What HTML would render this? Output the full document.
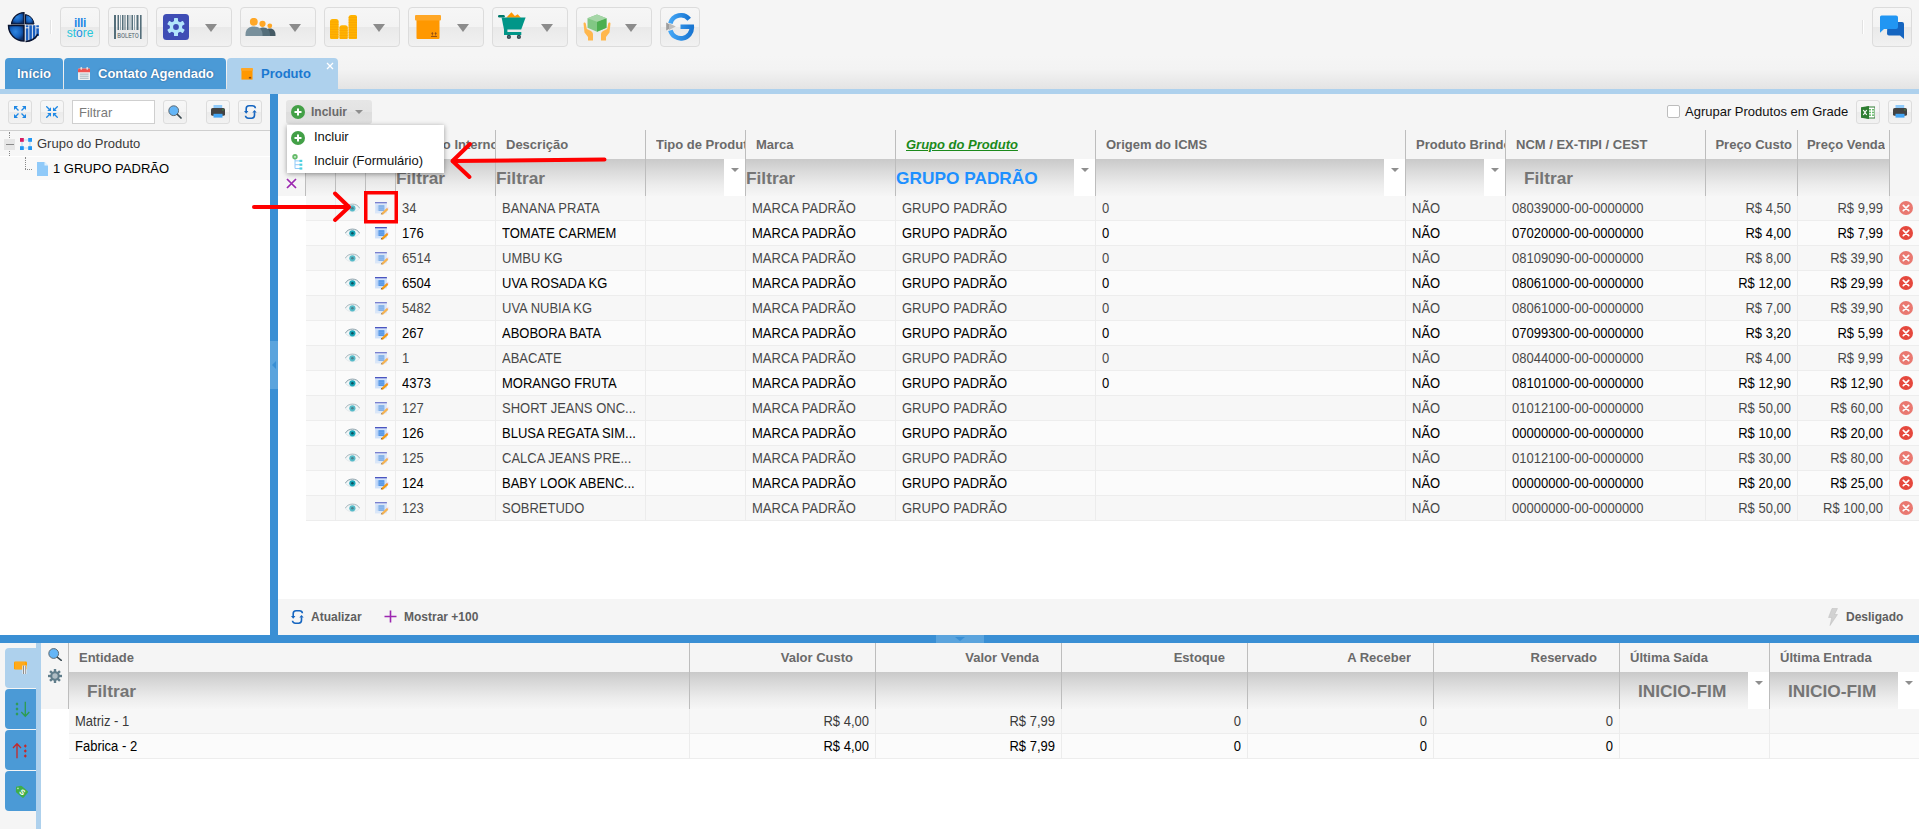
<!DOCTYPE html>
<html lang="pt-br">
<head>
<meta charset="utf-8">
<title>Produto</title>
<style>
*{box-sizing:border-box;margin:0;padding:0}
html,body{width:1919px;height:829px;overflow:hidden;background:#f5f5f5}
body{position:relative;font-family:"Liberation Sans",sans-serif;font-size:13px;color:#000}
.abs{position:absolute}
svg{display:block}
.ic{position:absolute}
/* top toolbar */
.tb{position:absolute;top:7px;height:40px;border:1px solid #dcdcdc;border-radius:4px;background:linear-gradient(#f6f6f6 0,#f3f3f3 50%,#e9e9e9 50%,#f1f1f1 100%)}
.tb .arr{position:absolute;left:48px;top:16px;width:0;height:0;border-left:6px solid transparent;border-right:6px solid transparent;border-top:8px solid #8c8c8c}
/* tabs */
.tab{position:absolute;top:58px;height:31px;border-radius:4px 4px 0 0;background:#4b9ad6;color:#fff;font-weight:bold;font-size:13px;line-height:31px;text-shadow:0 0 2px rgba(0,0,40,.45);white-space:nowrap}
.tab.sel{background:#aed1ed;color:#1b78d0;text-shadow:none}
/* small buttons */
.sb{position:absolute;width:24px;height:24px;border:1px solid #dddddd;border-radius:3px;background:linear-gradient(#f7f7f7 0,#f4f4f4 50%,#ebebeb 50%,#f2f2f2 100%)}
/* grid */
.hd{position:absolute;font-weight:bold;font-size:13px;color:#6a6a6a;white-space:nowrap;overflow:hidden;line-height:28px;height:28px}
.hsep{position:absolute;width:1px;background:#bdbdbd}
.fl{position:absolute;font-weight:bold;font-size:17.3px;color:#757575;white-space:nowrap;line-height:38px;height:38px}
.dd{position:absolute;background:#fff}
.dd:after{content:"";position:absolute;left:50%;margin-left:-4px;top:9px;border-left:4px solid transparent;border-right:4px solid transparent;border-top:4px solid #8e8e8e}
.row{position:absolute;left:306px;width:1613px;height:25px;border-bottom:1px solid #ededed}
.row.odd{background:#f7f7f7}
.row.even{background:#fbfbfb}
.row .vl{position:absolute;top:0;height:25px;width:1px;background:#ececec}
.row .rc{position:absolute;left:0;top:0;width:100%;height:24px}
.row.odd .rc{opacity:.72}
.row .c{position:absolute;top:1px;height:24px;line-height:24px;font-size:13px;white-space:nowrap;overflow:hidden}
.row .c.r{text-align:right}
.row .c,.brow .c{transform:scaleY(1.08);transform-origin:50% 72%}
.brow{position:absolute;left:69px;width:1850px;height:25px;border-bottom:1px solid #ededed}
.brow .c{position:absolute;top:1px;height:24px;line-height:24px;font-size:13px;white-space:nowrap}
.brow .c.r{text-align:right}
.brow .vl{position:absolute;top:0;height:25px;width:1px;background:#ececec}
.bt{position:absolute;left:5px;width:31px;height:40px;border-radius:4px 0 0 4px;background:#4b9ad6}
</style>
</head>
<body>
<!-- top toolbar -->
<svg class="ic" style="left:6px;top:10px" width="36" height="34" viewBox="0 0 36 34">
 <defs><radialGradient id="lg" cx="45%" cy="40%" r="60%"><stop offset="0" stop-color="#2f86e0"/><stop offset=".6" stop-color="#1560bd"/><stop offset="1" stop-color="#0b2e66"/></radialGradient></defs>
 <path d="M18 2.5 A13 13 0 0 0 5.5 14 L18 14 Z" fill="url(#lg)" stroke="#0a1430" stroke-width="1.2"/>
 <path d="M19.5 4.5 A11 11 0 0 1 28 14 L19.5 14 Z" fill="url(#lg)" stroke="#0a1430" stroke-width="1"/>
 <path d="M2.5 15.5 L18 15.5 L18 31 A15.5 15.5 0 0 1 2.5 15.5 Z" fill="url(#lg)" stroke="#0a1430" stroke-width="1.4"/>
 <path d="M19.5 31.5 L19.5 17 L33.5 17 A15 15 0 0 1 19.5 31.5Z" fill="#0b2e66" opacity=".0"/>
 <g fill="#1a5fbf"><rect x="19.800" y="18.300" width="2.600" height="12.200"/><rect x="23.300" y="15.300" width="2.600" height="15.700"/><rect x="26.800" y="15.300" width="2.600" height="13.700"/><rect x="30.300" y="18.300" width="2.600" height="7.700"/><rect x="19.800" y="15.300" width="2.600" height="2"/><rect x="30.300" y="15.300" width="2.600" height="2"/></g>
 <path d="M19.5 31.5 A15 15 0 0 0 32 24" fill="none" stroke="#0a1430" stroke-width="1.6"/>
</svg>
<div class="abs" style="left:51px;top:20px;width:1px;height:14px;background:#fff;box-shadow:-1px 0 0 #e2e2e2"></div>

<div class="tb" style="left:60px;width:40px">
 <div class="abs" style="left:0;top:9.700px;width:38px;text-align:center;font-weight:bold;font-size:12px;line-height:10px;color:#1e88e5;letter-spacing:-.3px">illi</div>
 <div class="abs" style="left:0;top:19.700px;width:38px;text-align:center;font-size:12px;line-height:10px;color:#26c6da">st<span style="color:#1e88e5">o</span>re</div>
</div>
<div class="tb" style="left:108px;width:40px">
 <svg class="ic" style="left:5px;top:7px" width="28" height="25" viewBox="0 0 28 25">
  <g fill="#546e7a"><rect x="0" y="0" width="2" height="24"/><rect x="3.5" y="0" width="1.5" height="15"/><rect x="6" y="0" width="1" height="15" fill="#90a4ae"/><rect x="8" y="0" width="1.5" height="15"/><rect x="10.5" y="0" width="1" height="15"/><rect x="13" y="0" width="1.5" height="15"/><rect x="15.5" y="0" width="1" height="15" fill="#90a4ae"/><rect x="17.5" y="0" width="1.5" height="15"/><rect x="20" y="0" width="1" height="15" fill="#90a4ae"/><rect x="22.5" y="0" width="2" height="15"/><rect x="26" y="0" width="1.6" height="24"/></g>
  <text x="3.200" y="23" font-family="Liberation Sans" font-weight="bold" font-size="6.300" fill="#78868c" textLength="21.500" lengthAdjust="spacingAndGlyphs">BOLETO</text>
 </svg>
</div>
<div class="tb" style="left:156px;width:76px"><i class="arr"></i>
 <svg class="ic" style="left:6px;top:6px" width="26" height="26" viewBox="0 0 26 26"><rect width="26" height="26" rx="3.5" fill="#3f4db5"/>
 <g transform="translate(13 13)" fill="#b3e5fc"><circle r="6.2"/><rect x="-2" y="-9" width="4" height="4" rx=".6" transform="rotate(0)"/><rect x="-2" y="-9" width="4" height="4" rx=".6" transform="rotate(60)"/><rect x="-2" y="-9" width="4" height="4" rx=".6" transform="rotate(120)"/><rect x="-2" y="-9" width="4" height="4" rx=".6" transform="rotate(180)"/><rect x="-2" y="-9" width="4" height="4" rx=".6" transform="rotate(240)"/><rect x="-2" y="-9" width="4" height="4" rx=".6" transform="rotate(300)"/><circle r="2.9" fill="#3f4db5"/></g></svg>
</div>
<div class="tb" style="left:240px;width:76px"><i class="arr"></i>
 <svg class="ic" style="left:4px;top:10px" width="31" height="19" viewBox="0 0 31 19">
  <path d="M19 18 C19 12.5 21.5 10.5 25 10.5 C28.5 10.5 30.5 13 30.5 17 L30.5 18 Z" fill="#455a64"/>
  <path d="M12 18 C12 11.5 14.5 9.5 18.5 9.5 C22.5 9.5 25 12.5 25 17 L25 18 Z" fill="#546e7a"/>
  <path d="M.5 18 L.5 16.5 C.5 11 4 8.5 9 8.5 C14 8.5 17.5 11.5 17.5 16.5 L17.5 18 Z" fill="#78909c"/>
  <circle cx="8.8" cy="3.8" r="3.9" fill="#ffa726"/><circle cx="17.5" cy="5.8" r="3.1" fill="#ffa726"/><circle cx="24.8" cy="7.8" r="2.4" fill="#ffa726"/>
 </svg>
</div>
<div class="tb" style="left:324px;width:76px"><i class="arr"></i>
 <svg class="ic" style="left:5px;top:6.800px" width="27.200" height="24.600" viewBox="0 0 27.200 24.600">
  <g fill="#ffb300"><rect x="0" y="4.100" width="8.600" height="20.500" rx="2.600"/><rect x="9.400" y="10.200" width="8.400" height="14.400" rx="2.600"/><rect x="18.600" y="0" width="8.600" height="24.600" rx="2.600"/></g>
  <g stroke="#f9a000" stroke-width=".6" opacity=".9"><path d="M0 7h8.600M0 9.500h8.600M0 12h8.600M0 14.500h8.600M0 17h8.600M0 19.500h8.600M0 22h8.600M9.400 13h8.400M9.400 15.500h8.400M9.400 18h8.400M9.400 20.500h8.400M9.400 23h8.400M18.600 2.500h8.600M18.600 5h8.600M18.600 7.500h8.600M18.600 10h8.600M18.600 12.500h8.600M18.600 15h8.600M18.600 17.500h8.600M18.600 20h8.600M18.600 22.500h8.600"/></g>
 </svg>
</div>
<div class="tb" style="left:408px;width:76px"><i class="arr"></i>
 <svg class="ic" style="left:6px;top:7px" width="27" height="25" viewBox="0 0 27 25">
  <rect x="1.500" y="4" width="23" height="20" rx="1" fill="#ff9800"/><rect x="0" y="0" width="26" height="5.5" rx="1" fill="#ffa726"/>
  <g fill="#8d4b16"><rect x="16" y="21" width="6" height=".9"/><path d="M17.300 17l-1.300 1.800h.9v1.700h.8v-1.700h.9zM20.700 17l-1.300 1.800h.9v1.700h.8v-1.700h.9z"/></g>
 </svg>
</div>
<div class="tb" style="left:492px;width:76px"><i class="arr"></i>
 <svg class="ic" style="left:5px;top:4px" width="28" height="28" viewBox="0 0 28 28">
  <path d="M8.300 5.800L13.400 0.200L16.900 3.900L19.700 2.200L22.900 5.800Z" fill="#ff9800"/>
  <rect x="0" y="3.100" width="6.800" height="2.400" rx="1.200" fill="#00796b"/>
  <path d="M3.600 5.500H27.600L23.200 17.500H6Z" fill="#009688"/>
  <path d="M6 17H9.400V20.100H23.300V22.900H6Z" fill="#009688"/>
  <circle cx="10.900" cy="24.900" r="2.100" fill="#37474f"/><circle cx="20.900" cy="24.900" r="2.100" fill="#37474f"/><circle cx="10.900" cy="24.900" r=".8" fill="#607d8b"/><circle cx="20.900" cy="24.900" r=".8" fill="#607d8b"/>
 </svg>
</div>
<div class="tb" style="left:576px;width:76px"><i class="arr"></i>
 <svg class="ic" style="left:6px;top:6px" width="28" height="28" viewBox="0 0 28 28">
  <path d="M14 .5 L23.500 4.200 V13.800 L14 17.800 L4.500 13.800 V4.200 Z" fill="#81c784"/>
  <path d="M14 7.800 L23.500 4.200 V13.800 L14 17.800 Z" fill="#4caf50"/>
  <path d="M14 .5 L23.500 4.200 L14 7.800 L4.500 4.200 Z" fill="#a5d6a7"/>
  <path d="M0.500 9.500 C0.500 8 2.500 8 2.800 9.500 L3.800 15 L7.500 16.800 C9 17.500 10 19 10 20.500 V26.500 H5 V23 L1.500 18.500 Z" fill="#ffb74d"/>
  <path d="M27.500 9.500 C27.500 8 25.500 8 25.200 9.500 L24.200 15 L20.500 16.800 C19 17.500 18 19 18 20.500 V26.500 H23 V23 L26.500 18.500 Z" fill="#ffb74d"/>
 </svg>
</div>
<div class="tb" style="left:660px;width:40px">
 <svg class="ic" style="left:5px;top:5px" width="30" height="28" viewBox="0 0 30 28">
  <defs><linearGradient id="gg" x1="0" y1="0" x2="1" y2="0"><stop offset="0" stop-color="#42a5f5"/><stop offset="1" stop-color="#1976d2"/></linearGradient></defs>
  <path d="M23.200 6.200A10.900 10.900 0 0 0 4.400 10.300" fill="none" stroke="url(#gg)" stroke-width="4.600"/>
  <path d="M4.400 17.300A10.900 10.900 0 0 0 25.800 13.700H14.500" fill="none" stroke="url(#gg)" stroke-width="4.600"/>
  <path d="M0.200 9.600L7.500 13.600L0.200 17.600Z" fill="#9e9e9e"/><path d="M3 10.200L9.800 13.600L3 17Z" fill="#bdbdbd"/>
 </svg>
</div>
<!-- chat button right -->
<div class="abs" style="left:1863px;top:20px;width:1px;height:14px;background:#fff;box-shadow:-1px 0 0 #e2e2e2"></div>
<div class="tb" style="left:1872px;width:40px">
 <svg class="ic" style="left:6px;top:7px" width="26" height="25" viewBox="0 0 26 25">
  <path d="M8.500 7 H23 Q25 7 25 9 V24 L21 20.500 H10 Q8 20.500 8 18.500 Z" fill="#1565c0"/>
  <path d="M2.500 0.500 H17 Q19 0.500 19 2.500 V12 Q19 14 17 14 H5 L1 17.800 V2 Q1 0.500 2.500 0.500 Z" fill="#2196f3"/>
 </svg>
</div>

<!-- tab strip -->
<div class="abs" style="left:5px;top:56px;width:1914px;height:33px;background:linear-gradient(#f5f5f5 0,#f3f3f3 40%,#e4e4e4 100%)"></div>
<div class="abs" style="left:0;top:89px;width:1919px;height:5px;background:#aed1ed"></div>
<div class="tab" style="left:5px;width:58px;padding-left:12px">Início</div>
<div class="tab" style="left:64px;width:162px;padding-left:34px">Contato Agendado
 <svg class="ic" style="left:13.500px;top:9px" width="12.500" height="13.200" viewBox="0 0 13 14" preserveAspectRatio="none"><rect x="0" y="1.500" width="13" height="12.500" rx="1.500" fill="#eceff1"/><path d="M0 3 Q0 1.500 1.500 1.500 H11.500 Q13 1.500 13 3 V5.500 H0Z" fill="#ef5350"/><rect x="2.500" y="0" width="1.800" height="3" rx=".8" fill="#e0e0e0"/><rect x="8.700" y="0" width="1.800" height="3" rx=".8" fill="#e0e0e0"/><g fill="#b0bec5"><rect x="2" y="7" width="9" height="1.200"/><rect x="2" y="9.200" width="9" height="1.200"/><rect x="2" y="11.400" width="9" height="1.200"/></g></svg>
</div>
<div class="tab sel" style="left:227px;width:111px;padding-left:34px">Produto
 <svg class="ic" style="left:14px;top:10px" width="12" height="11.600" viewBox="0 0 13 13" preserveAspectRatio="none"><rect x=".5" y="2" width="12" height="11" fill="#ff9800"/><rect x="0" y="0" width="13" height="3" rx=".5" fill="#ffa726"/><rect x="8.500" y="10" width="2.500" height="1.800" fill="#8d4b16"/></svg>
 <svg class="ic" style="left:99px;top:4px" width="8" height="8" viewBox="0 0 8 8"><path d="M1 1L7 7M7 1L1 7" stroke="#fff" stroke-width="1.300"/></svg>
</div>

<!-- left panel -->
<div class="abs" style="left:0;top:94px;width:270px;height:541px;background:#fff"></div>
<div class="abs" style="left:0;top:94px;width:270px;height:37px;background:#f5f5f5;border-bottom:1px solid #cfcfcf"></div>
<div class="sb" style="left:8px;top:100px"><svg class="ic" style="left:5px;top:5px" width="12" height="12" viewBox="0 0 12 12"><g fill="#1e88e5"><path d="M0 0H4L0 4Z"/><path d="M12 0H8L12 4Z"/><path d="M0 12H4L0 8Z"/><path d="M12 12H8L12 8Z"/></g><g stroke="#1e88e5" stroke-width="1.300"><path d="M1 1L4.500 4.500M11 1L7.500 4.500M1 11L4.500 7.500M11 11L7.500 7.500"/></g></svg></div>
<div class="sb" style="left:40px;top:100px"><svg class="ic" style="left:5px;top:5px" width="12" height="12" viewBox="0 0 12 12"><g fill="#1e88e5"><path d="M5 5H1.200L5 1.200Z"/><path d="M7 5H10.800L7 1.200Z"/><path d="M5 7H1.200L5 10.800Z"/><path d="M7 7H10.800L7 10.800Z"/></g><g stroke="#1e88e5" stroke-width="1.300"><path d="M0.300 0.300L4 4M11.700 0.300L8 4M0.300 11.700L4 8M11.700 11.700L8 8"/></g></svg></div>
<div class="abs" style="left:72px;top:100px;width:83px;height:24px;border:1px solid #cfcfcf;background:#fff;font-size:13px;line-height:23px;color:#7a7a7a;padding-left:6px">Filtrar</div>
<div class="sb" style="left:163px;top:100px"><svg class="ic" style="left:4px;top:4px" width="14" height="14" viewBox="0 0 14 14"><circle cx="5.700" cy="5.700" r="4.900" fill="#64b5f6" stroke="#5f6b73" stroke-width="1"/><path d="M9.500 9.500L13 13" stroke="#37474f" stroke-width="1.700" stroke-linecap="round"/></svg></div>
<div class="sb" style="left:206px;top:100px"><svg class="ic" style="left:4px;top:4px" width="14" height="13" viewBox="0 0 14 13"><rect x="2.500" y="0" width="8.700" height="3.600" fill="#90caf9"/><rect x="0" y="3" width="14" height="7.800" rx="1.600" fill="#424242"/><rect x="2.500" y="8.800" width="9" height="3.800" fill="#42a5f5"/><rect x="11.300" y="4.300" width="1.200" height="1.200" fill="#43a047"/></svg></div>
<div class="sb" style="left:238px;top:100px"><svg class="ic" style="left:5px;top:4px" width="13" height="14" viewBox="0 0 13 14"><g fill="none" stroke="#1565c0" stroke-width="1.600"><path d="M2.200 6.500V3.700Q2.200 0.800 5.100 0.800H8.400Q11.200 0.800 11.400 3.200"/><path d="M10.500 7.200V10.300Q10.500 13.200 7.600 13.200H4.500Q1.700 13.200 1.500 10.800"/></g><path d="M0 6.100H4.400L2.200 8.700Z" fill="#1565c0"/><path d="M8.300 7.600H12.700L10.500 5Z" fill="#1565c0"/></svg></div>
<!-- tree -->
<div class="abs" style="left:0;top:131px;width:270px;height:25px;background:#f7f7f7"></div>
<div class="abs" style="left:0;top:157px;width:270px;height:23px;background:#f9f9f9"></div>
<div class="abs" style="left:9px;top:132px;width:0;height:24px;border-left:1px dotted #8a8a8a"></div>
<div class="abs" style="left:4px;top:139px;width:11px;height:11px;background:#e6e6e6"></div>
<div class="abs" style="left:6px;top:144px;width:8px;height:1px;background:#8a8a8a"></div>
<svg class="ic" style="left:20px;top:138px" width="12" height="12" viewBox="0 0 12 12"><path d="M2 2H10V10H2Z" fill="none" stroke="#bbdefb" stroke-width="1.200"/><rect x="0" y="0" width="3.800" height="3.800" fill="#d81b60"/><rect x="8.200" y="0" width="3.800" height="3.800" fill="#2196f3"/><rect x="0" y="8.200" width="3.800" height="3.800" fill="#2196f3"/><rect x="8.200" y="8.200" width="3.800" height="3.800" fill="#2196f3"/></svg>
<div class="abs" style="left:37px;top:132px;height:24px;line-height:24px;font-size:13px;color:#3a3a3a">Grupo do Produto</div>
<div class="abs" style="left:25px;top:157px;width:0;height:12px;border-left:1px dotted #8a8a8a"></div>
<div class="abs" style="left:25px;top:169px;width:7px;height:0;border-top:1px dotted #8a8a8a"></div>
<svg class="ic" style="left:37px;top:162px" width="11" height="14" viewBox="0 0 11 14"><path d="M0 0H7.500L11 3.500V14H0Z" fill="#90caf9"/><path d="M7.500 0L11 3.500H7.500Z" fill="#e3f2fd"/></svg>
<div class="abs" style="left:53px;top:157px;height:24px;line-height:24px;font-size:13px;color:#000">1 GRUPO PADRÃO</div>
<!-- splitters -->
<div class="abs" style="left:270px;top:94px;width:8px;height:541px;background:#3a8fd4"></div>
<div class="abs" style="left:270px;top:341px;width:8px;height:48px;background:#5ba4dd"></div>
<div class="abs" style="left:272px;top:361px;width:0;height:0;border-top:4.500px solid transparent;border-bottom:4.500px solid transparent;border-right:4px solid #3a8fd4"></div>
<div class="abs" style="left:0;top:635px;width:1919px;height:8px;background:#3a8fd4"></div>
<div class="abs" style="left:936px;top:635px;width:48px;height:8px;background:#5ba4dd"></div>
<div class="abs" style="left:955px;top:637px;width:0;height:0;border-left:5px solid transparent;border-right:5px solid transparent;border-top:4px solid #3a8fd4"></div>

<!-- right panel -->
<div class="abs" style="left:278px;top:94px;width:1641px;height:541px;background:#fff"></div>
<div class="abs" style="left:278px;top:94px;width:1641px;height:65px;background:#f5f5f5"></div>
<div class="abs" style="left:286px;top:100px;width:86px;height:24px;border-radius:3px;background:linear-gradient(#e6e6e6 0,#e3e3e3 50%,#dddddd 50%,#e0e0e0 100%);font-weight:bold;font-size:12px;color:#6a6a6a;line-height:24px;padding-left:25px">Incluir
 <svg class="ic" style="left:5px;top:5px" width="14" height="14" viewBox="0 0 14 14"><circle cx="7" cy="7" r="7" fill="#43a047"/><path d="M7 3.500V10.500M3.500 7H10.500" stroke="#fff" stroke-width="2"/></svg>
 <i class="abs" style="left:69px;top:10px;width:0;height:0;border-left:4px solid transparent;border-right:4px solid transparent;border-top:4px solid #8e8e8e"></i>
</div>
<div class="abs" style="left:1667px;top:105px;width:13px;height:13px;border:1px solid #bdbdbd;border-radius:2px;background:#fff"></div>
<div class="abs" style="left:1685px;top:100px;height:24px;line-height:23px;font-size:13px;color:#111">Agrupar Produtos em Grade</div>
<div class="sb" style="left:1856px;top:100px"><svg class="ic" style="left:4px;top:5px" width="14" height="13" viewBox="0 0 14 13"><rect x="6" y="1" width="8" height="11" fill="#fff" stroke="#2e7d32" stroke-width="1"/><g fill="#66bb6a"><rect x="8" y="3" width="2" height="1.500"/><rect x="11" y="3" width="2" height="1.500"/><rect x="8" y="5.700" width="2" height="1.500"/><rect x="11" y="5.700" width="2" height="1.500"/><rect x="8" y="8.400" width="2" height="1.500"/><rect x="11" y="8.400" width="2" height="1.500"/></g><path d="M0 1.200L8 0V13L0 11.800Z" fill="#2e7d32"/><path d="M2.300 4L5.700 9M5.700 4L2.300 9" stroke="#fff" stroke-width="1.200"/></svg></div>
<div class="sb" style="left:1888px;top:100px"><svg class="ic" style="left:4px;top:4px" width="14" height="13" viewBox="0 0 14 13"><rect x="2.500" y="0" width="8.700" height="3.600" fill="#90caf9"/><rect x="0" y="3" width="14" height="7.800" rx="1.600" fill="#424242"/><rect x="2.500" y="8.800" width="9" height="3.800" fill="#42a5f5"/><rect x="11.300" y="4.300" width="1.200" height="1.200" fill="#43a047"/></svg></div>
<!-- filter row bg -->
<div class="abs" style="left:278px;top:159px;width:28px;height:37px;background:#f5f5f5"></div>
<div class="abs" style="left:306px;top:159px;width:1584px;height:37px;background:linear-gradient(#c9c9c9 0,#d9d9d9 30%,#ececec 70%,#f6f6f6 100%)"></div>
<div class="abs" style="left:1890px;top:159px;width:29px;height:37px;background:#f5f5f5"></div>
<!-- header separators -->
<i class="hsep" style="left:305px;top:130px;height:66px"></i>
<i class="hsep" style="left:335px;top:130px;height:66px"></i>
<i class="hsep" style="left:365px;top:130px;height:66px"></i>
<i class="hsep" style="left:395px;top:130px;height:66px"></i>
<i class="hsep" style="left:495px;top:130px;height:66px"></i>
<i class="hsep" style="left:645px;top:130px;height:66px"></i>
<i class="hsep" style="left:745px;top:130px;height:66px"></i>
<i class="hsep" style="left:895px;top:130px;height:66px"></i>
<i class="hsep" style="left:1095px;top:130px;height:66px"></i>
<i class="hsep" style="left:1405px;top:130px;height:66px"></i>
<i class="hsep" style="left:1505px;top:130px;height:66px"></i>
<i class="hsep" style="left:1705px;top:130px;height:66px"></i>
<i class="hsep" style="left:1797px;top:130px;height:66px"></i>
<i class="hsep" style="left:1889px;top:130px;height:66px"></i>
<!-- header labels -->
<div class="hd" style="left:406px;top:131px;width:89px">Código Interno</div>
<div class="hd" style="left:506px;top:131px;width:139px">Descrição</div>
<div class="hd" style="left:656px;top:131px;width:89px">Tipo de Produto</div>
<div class="hd" style="left:756px;top:131px;width:139px">Marca</div>
<div class="hd" style="left:906px;top:131px;width:189px;color:#1b8a1b;font-style:italic;text-decoration:underline">Grupo do Produto</div>
<div class="hd" style="left:1106px;top:131px;width:299px">Origem do ICMS</div>
<div class="hd" style="left:1416px;top:131px;width:89px">Produto Brinde</div>
<div class="hd" style="left:1516px;top:131px;width:189px">NCM / EX-TIPI / CEST</div>
<div class="hd" style="left:1706px;top:131px;width:86px;text-align:right">Preço Custo</div>
<div class="hd" style="left:1798px;top:131px;width:87px;text-align:right">Preço Venda</div>
<!-- filter cells -->
<svg class="ic" style="left:286px;top:178px" width="11" height="11" viewBox="0 0 11 11"><path d="M1 1L10 10M10 1L1 10" stroke="#9c27b0" stroke-width="1.700"/></svg>
<div class="fl" style="left:396px;top:159px">Filtrar</div>
<div class="fl" style="left:496px;top:159px">Filtrar</div>
<div class="dd" style="left:724px;top:159px;width:21px;height:37px"></div>
<div class="fl" style="left:746px;top:159px">Filtrar</div>
<div class="fl" style="left:896px;top:159px;color:#1e90ff">GRUPO PADRÃO</div>
<div class="dd" style="left:1074px;top:159px;width:21px;height:37px"></div>
<div class="dd" style="left:1384px;top:159px;width:21px;height:37px"></div>
<div class="dd" style="left:1484px;top:159px;width:21px;height:37px"></div>
<div class="fl" style="left:1524px;top:159px">Filtrar</div>
<!-- bottom bar -->
<div class="abs" style="left:278px;top:599px;width:1641px;height:36px;background:#f5f5f5"></div>
<svg class="ic" style="left:291px;top:610px" width="13" height="14" viewBox="0 0 13 14"><g fill="none" stroke="#1565c0" stroke-width="1.600"><path d="M2.200 6.500V3.700Q2.200 0.800 5.100 0.800H8.400Q11.200 0.800 11.400 3.200"/><path d="M10.500 7.200V10.300Q10.500 13.200 7.600 13.200H4.500Q1.700 13.200 1.500 10.800"/></g><path d="M0 6.100H4.400L2.200 8.700Z" fill="#1565c0"/><path d="M8.300 7.600H12.700L10.500 5Z" fill="#1565c0"/></svg>
<div class="abs" style="left:311px;top:605px;height:24px;line-height:24px;font-weight:bold;font-size:12px;color:#5f5f5f">Atualizar</div>
<svg class="ic" style="left:384px;top:610px" width="13" height="13" viewBox="0 0 13 13"><path d="M6.500 0.500V12.500M0.500 6.500H12.500" stroke="#9c27b0" stroke-width="1.600"/></svg>
<div class="abs" style="left:404px;top:605px;height:24px;line-height:24px;font-weight:bold;font-size:12px;color:#5f5f5f">Mostrar +100</div>
<svg class="ic" style="left:1827px;top:608px" width="12" height="18" viewBox="0 0 12 18"><path d="M5 0.500H10.500L7.500 6.500H10.500L3 17.500L4.800 9.500H1.500Z" fill="#d2d2d2" stroke="#bdbdbd" stroke-width=".5"/></svg>
<div class="abs" style="left:1846px;top:605px;height:24px;line-height:24px;font-weight:bold;font-size:12px;color:#5f5f5f">Desligado</div>

<div class="row odd" style="top:196px"><i class="vl" style="left:29px"></i><i class="vl" style="left:59px"></i><i class="vl" style="left:89px"></i><i class="vl" style="left:189px"></i><i class="vl" style="left:339px"></i><i class="vl" style="left:439px"></i><i class="vl" style="left:589px"></i><i class="vl" style="left:789px"></i><i class="vl" style="left:1099px"></i><i class="vl" style="left:1199px"></i><i class="vl" style="left:1399px"></i><i class="vl" style="left:1491px"></i><i class="vl" style="left:1583px"></i><div class="rc"><svg class="ic" style="left:39px;top:7px" width="15" height="10" viewBox="0 0 15 10"><path d="M0.300 5.200C3 0.200 12 0.200 14.600 5.200C12 9.800 3 9.800 0.300 5.200Z" fill="#f1f6f8" stroke="#d3dde1" stroke-width="0.700"/><path d="M0.300 5.200C3 -0.300 12 -0.300 14.600 5.200" fill="none" stroke="#8fa5ae" stroke-width="1"/><circle cx="7.400" cy="5.300" r="3.100" fill="#18a5b8"/><circle cx="7.400" cy="5.300" r="1.300" fill="#0b5563"/></svg><svg class="ic" style="left:69px;top:6px" width="14" height="14" viewBox="0 0 14 14"><rect x="0" y="0" width="11.900" height="1.700" fill="#4a55c0"/><rect x="0" y="1.500" width="11.900" height="9.900" fill="#d0e2fb"/><rect x="1.500" y="3.200" width="1.400" height="5.700" fill="#b5d0f7"/><rect x="3.400" y="3.200" width="6" height="5.700" fill="#4a90e2"/><rect x="3.400" y="4.800" width="6" height=".5" fill="#a8c8f5"/><rect x="3.400" y="6.800" width="6" height=".5" fill="#a8c8f5"/><path d="M12.600 6.900L6.900 12.100" stroke="#f59a14" stroke-width="2.200"/><path d="M7.600 11.500L5.800 13L6.300 10.900Z" fill="#6d4c2f"/><path d="M13.500 6L12.300 7.100L11.900 6.300L13 5.400Z" fill="#ef7d8c"/></svg><span class="c" style="left:96px;width:92px">34</span><span class="c" style="left:196px;width:142px">BANANA PRATA</span><span class="c" style="left:446px;width:142px">MARCA PADRÃO</span><span class="c" style="left:596px;width:192px">GRUPO PADRÃO</span><span class="c" style="left:796px;width:302px">0</span><span class="c" style="left:1106px;width:92px">NÃO</span><span class="c" style="left:1206px;width:192px">08039000-00-0000000</span><span class="c r" style="left:1400px;width:85px">R$ 4,50</span><span class="c r" style="left:1492px;width:85px">R$ 9,99</span><svg class="ic" style="left:1593px;top:5px" width="14" height="14" viewBox="0 0 14 14"><circle cx="7" cy="7" r="7" fill="#e5483d"/><path d="M4.3 4.3 L9.7 9.7 M9.7 4.3 L4.3 9.7" stroke="#fff" stroke-width="1.7" stroke-linecap="round"/></svg></div></div>
<div class="row even" style="top:221px"><i class="vl" style="left:29px"></i><i class="vl" style="left:59px"></i><i class="vl" style="left:89px"></i><i class="vl" style="left:189px"></i><i class="vl" style="left:339px"></i><i class="vl" style="left:439px"></i><i class="vl" style="left:589px"></i><i class="vl" style="left:789px"></i><i class="vl" style="left:1099px"></i><i class="vl" style="left:1199px"></i><i class="vl" style="left:1399px"></i><i class="vl" style="left:1491px"></i><i class="vl" style="left:1583px"></i><div class="rc"><svg class="ic" style="left:39px;top:7px" width="15" height="10" viewBox="0 0 15 10"><path d="M0.300 5.200C3 0.200 12 0.200 14.600 5.200C12 9.800 3 9.800 0.300 5.200Z" fill="#f1f6f8" stroke="#d3dde1" stroke-width="0.700"/><path d="M0.300 5.200C3 -0.300 12 -0.300 14.600 5.200" fill="none" stroke="#8fa5ae" stroke-width="1"/><circle cx="7.400" cy="5.300" r="3.100" fill="#18a5b8"/><circle cx="7.400" cy="5.300" r="1.300" fill="#0b5563"/></svg><svg class="ic" style="left:69px;top:6px" width="14" height="14" viewBox="0 0 14 14"><rect x="0" y="0" width="11.900" height="1.700" fill="#4a55c0"/><rect x="0" y="1.500" width="11.900" height="9.900" fill="#d0e2fb"/><rect x="1.500" y="3.200" width="1.400" height="5.700" fill="#b5d0f7"/><rect x="3.400" y="3.200" width="6" height="5.700" fill="#4a90e2"/><rect x="3.400" y="4.800" width="6" height=".5" fill="#a8c8f5"/><rect x="3.400" y="6.800" width="6" height=".5" fill="#a8c8f5"/><path d="M12.600 6.900L6.900 12.100" stroke="#f59a14" stroke-width="2.200"/><path d="M7.600 11.500L5.800 13L6.300 10.900Z" fill="#6d4c2f"/><path d="M13.500 6L12.300 7.100L11.900 6.300L13 5.400Z" fill="#ef7d8c"/></svg><span class="c" style="left:96px;width:92px">176</span><span class="c" style="left:196px;width:142px">TOMATE CARMEM</span><span class="c" style="left:446px;width:142px">MARCA PADRÃO</span><span class="c" style="left:596px;width:192px">GRUPO PADRÃO</span><span class="c" style="left:796px;width:302px">0</span><span class="c" style="left:1106px;width:92px">NÃO</span><span class="c" style="left:1206px;width:192px">07020000-00-0000000</span><span class="c r" style="left:1400px;width:85px">R$ 4,00</span><span class="c r" style="left:1492px;width:85px">R$ 7,99</span><svg class="ic" style="left:1593px;top:5px" width="14" height="14" viewBox="0 0 14 14"><circle cx="7" cy="7" r="7" fill="#e5483d"/><path d="M4.3 4.3 L9.7 9.7 M9.7 4.3 L4.3 9.7" stroke="#fff" stroke-width="1.7" stroke-linecap="round"/></svg></div></div>
<div class="row odd" style="top:246px"><i class="vl" style="left:29px"></i><i class="vl" style="left:59px"></i><i class="vl" style="left:89px"></i><i class="vl" style="left:189px"></i><i class="vl" style="left:339px"></i><i class="vl" style="left:439px"></i><i class="vl" style="left:589px"></i><i class="vl" style="left:789px"></i><i class="vl" style="left:1099px"></i><i class="vl" style="left:1199px"></i><i class="vl" style="left:1399px"></i><i class="vl" style="left:1491px"></i><i class="vl" style="left:1583px"></i><div class="rc"><svg class="ic" style="left:39px;top:7px" width="15" height="10" viewBox="0 0 15 10"><path d="M0.300 5.200C3 0.200 12 0.200 14.600 5.200C12 9.800 3 9.800 0.300 5.200Z" fill="#f1f6f8" stroke="#d3dde1" stroke-width="0.700"/><path d="M0.300 5.200C3 -0.300 12 -0.300 14.600 5.200" fill="none" stroke="#8fa5ae" stroke-width="1"/><circle cx="7.400" cy="5.300" r="3.100" fill="#18a5b8"/><circle cx="7.400" cy="5.300" r="1.300" fill="#0b5563"/></svg><svg class="ic" style="left:69px;top:6px" width="14" height="14" viewBox="0 0 14 14"><rect x="0" y="0" width="11.900" height="1.700" fill="#4a55c0"/><rect x="0" y="1.500" width="11.900" height="9.900" fill="#d0e2fb"/><rect x="1.500" y="3.200" width="1.400" height="5.700" fill="#b5d0f7"/><rect x="3.400" y="3.200" width="6" height="5.700" fill="#4a90e2"/><rect x="3.400" y="4.800" width="6" height=".5" fill="#a8c8f5"/><rect x="3.400" y="6.800" width="6" height=".5" fill="#a8c8f5"/><path d="M12.600 6.900L6.900 12.100" stroke="#f59a14" stroke-width="2.200"/><path d="M7.600 11.500L5.800 13L6.300 10.900Z" fill="#6d4c2f"/><path d="M13.500 6L12.300 7.100L11.900 6.300L13 5.400Z" fill="#ef7d8c"/></svg><span class="c" style="left:96px;width:92px">6514</span><span class="c" style="left:196px;width:142px">UMBU KG</span><span class="c" style="left:446px;width:142px">MARCA PADRÃO</span><span class="c" style="left:596px;width:192px">GRUPO PADRÃO</span><span class="c" style="left:796px;width:302px">0</span><span class="c" style="left:1106px;width:92px">NÃO</span><span class="c" style="left:1206px;width:192px">08109090-00-0000000</span><span class="c r" style="left:1400px;width:85px">R$ 8,00</span><span class="c r" style="left:1492px;width:85px">R$ 39,90</span><svg class="ic" style="left:1593px;top:5px" width="14" height="14" viewBox="0 0 14 14"><circle cx="7" cy="7" r="7" fill="#e5483d"/><path d="M4.3 4.3 L9.7 9.7 M9.7 4.3 L4.3 9.7" stroke="#fff" stroke-width="1.7" stroke-linecap="round"/></svg></div></div>
<div class="row even" style="top:271px"><i class="vl" style="left:29px"></i><i class="vl" style="left:59px"></i><i class="vl" style="left:89px"></i><i class="vl" style="left:189px"></i><i class="vl" style="left:339px"></i><i class="vl" style="left:439px"></i><i class="vl" style="left:589px"></i><i class="vl" style="left:789px"></i><i class="vl" style="left:1099px"></i><i class="vl" style="left:1199px"></i><i class="vl" style="left:1399px"></i><i class="vl" style="left:1491px"></i><i class="vl" style="left:1583px"></i><div class="rc"><svg class="ic" style="left:39px;top:7px" width="15" height="10" viewBox="0 0 15 10"><path d="M0.300 5.200C3 0.200 12 0.200 14.600 5.200C12 9.800 3 9.800 0.300 5.200Z" fill="#f1f6f8" stroke="#d3dde1" stroke-width="0.700"/><path d="M0.300 5.200C3 -0.300 12 -0.300 14.600 5.200" fill="none" stroke="#8fa5ae" stroke-width="1"/><circle cx="7.400" cy="5.300" r="3.100" fill="#18a5b8"/><circle cx="7.400" cy="5.300" r="1.300" fill="#0b5563"/></svg><svg class="ic" style="left:69px;top:6px" width="14" height="14" viewBox="0 0 14 14"><rect x="0" y="0" width="11.900" height="1.700" fill="#4a55c0"/><rect x="0" y="1.500" width="11.900" height="9.900" fill="#d0e2fb"/><rect x="1.500" y="3.200" width="1.400" height="5.700" fill="#b5d0f7"/><rect x="3.400" y="3.200" width="6" height="5.700" fill="#4a90e2"/><rect x="3.400" y="4.800" width="6" height=".5" fill="#a8c8f5"/><rect x="3.400" y="6.800" width="6" height=".5" fill="#a8c8f5"/><path d="M12.600 6.900L6.900 12.100" stroke="#f59a14" stroke-width="2.200"/><path d="M7.600 11.500L5.800 13L6.300 10.900Z" fill="#6d4c2f"/><path d="M13.500 6L12.300 7.100L11.900 6.300L13 5.400Z" fill="#ef7d8c"/></svg><span class="c" style="left:96px;width:92px">6504</span><span class="c" style="left:196px;width:142px">UVA ROSADA KG</span><span class="c" style="left:446px;width:142px">MARCA PADRÃO</span><span class="c" style="left:596px;width:192px">GRUPO PADRÃO</span><span class="c" style="left:796px;width:302px">0</span><span class="c" style="left:1106px;width:92px">NÃO</span><span class="c" style="left:1206px;width:192px">08061000-00-0000000</span><span class="c r" style="left:1400px;width:85px">R$ 12,00</span><span class="c r" style="left:1492px;width:85px">R$ 29,99</span><svg class="ic" style="left:1593px;top:5px" width="14" height="14" viewBox="0 0 14 14"><circle cx="7" cy="7" r="7" fill="#e5483d"/><path d="M4.3 4.3 L9.7 9.7 M9.7 4.3 L4.3 9.7" stroke="#fff" stroke-width="1.7" stroke-linecap="round"/></svg></div></div>
<div class="row odd" style="top:296px"><i class="vl" style="left:29px"></i><i class="vl" style="left:59px"></i><i class="vl" style="left:89px"></i><i class="vl" style="left:189px"></i><i class="vl" style="left:339px"></i><i class="vl" style="left:439px"></i><i class="vl" style="left:589px"></i><i class="vl" style="left:789px"></i><i class="vl" style="left:1099px"></i><i class="vl" style="left:1199px"></i><i class="vl" style="left:1399px"></i><i class="vl" style="left:1491px"></i><i class="vl" style="left:1583px"></i><div class="rc"><svg class="ic" style="left:39px;top:7px" width="15" height="10" viewBox="0 0 15 10"><path d="M0.300 5.200C3 0.200 12 0.200 14.600 5.200C12 9.800 3 9.800 0.300 5.200Z" fill="#f1f6f8" stroke="#d3dde1" stroke-width="0.700"/><path d="M0.300 5.200C3 -0.300 12 -0.300 14.600 5.200" fill="none" stroke="#8fa5ae" stroke-width="1"/><circle cx="7.400" cy="5.300" r="3.100" fill="#18a5b8"/><circle cx="7.400" cy="5.300" r="1.300" fill="#0b5563"/></svg><svg class="ic" style="left:69px;top:6px" width="14" height="14" viewBox="0 0 14 14"><rect x="0" y="0" width="11.900" height="1.700" fill="#4a55c0"/><rect x="0" y="1.500" width="11.900" height="9.900" fill="#d0e2fb"/><rect x="1.500" y="3.200" width="1.400" height="5.700" fill="#b5d0f7"/><rect x="3.400" y="3.200" width="6" height="5.700" fill="#4a90e2"/><rect x="3.400" y="4.800" width="6" height=".5" fill="#a8c8f5"/><rect x="3.400" y="6.800" width="6" height=".5" fill="#a8c8f5"/><path d="M12.600 6.900L6.900 12.100" stroke="#f59a14" stroke-width="2.200"/><path d="M7.600 11.500L5.800 13L6.300 10.900Z" fill="#6d4c2f"/><path d="M13.500 6L12.300 7.100L11.900 6.300L13 5.400Z" fill="#ef7d8c"/></svg><span class="c" style="left:96px;width:92px">5482</span><span class="c" style="left:196px;width:142px">UVA NUBIA KG</span><span class="c" style="left:446px;width:142px">MARCA PADRÃO</span><span class="c" style="left:596px;width:192px">GRUPO PADRÃO</span><span class="c" style="left:796px;width:302px">0</span><span class="c" style="left:1106px;width:92px">NÃO</span><span class="c" style="left:1206px;width:192px">08061000-00-0000000</span><span class="c r" style="left:1400px;width:85px">R$ 7,00</span><span class="c r" style="left:1492px;width:85px">R$ 39,90</span><svg class="ic" style="left:1593px;top:5px" width="14" height="14" viewBox="0 0 14 14"><circle cx="7" cy="7" r="7" fill="#e5483d"/><path d="M4.3 4.3 L9.7 9.7 M9.7 4.3 L4.3 9.7" stroke="#fff" stroke-width="1.7" stroke-linecap="round"/></svg></div></div>
<div class="row even" style="top:321px"><i class="vl" style="left:29px"></i><i class="vl" style="left:59px"></i><i class="vl" style="left:89px"></i><i class="vl" style="left:189px"></i><i class="vl" style="left:339px"></i><i class="vl" style="left:439px"></i><i class="vl" style="left:589px"></i><i class="vl" style="left:789px"></i><i class="vl" style="left:1099px"></i><i class="vl" style="left:1199px"></i><i class="vl" style="left:1399px"></i><i class="vl" style="left:1491px"></i><i class="vl" style="left:1583px"></i><div class="rc"><svg class="ic" style="left:39px;top:7px" width="15" height="10" viewBox="0 0 15 10"><path d="M0.300 5.200C3 0.200 12 0.200 14.600 5.200C12 9.800 3 9.800 0.300 5.200Z" fill="#f1f6f8" stroke="#d3dde1" stroke-width="0.700"/><path d="M0.300 5.200C3 -0.300 12 -0.300 14.600 5.200" fill="none" stroke="#8fa5ae" stroke-width="1"/><circle cx="7.400" cy="5.300" r="3.100" fill="#18a5b8"/><circle cx="7.400" cy="5.300" r="1.300" fill="#0b5563"/></svg><svg class="ic" style="left:69px;top:6px" width="14" height="14" viewBox="0 0 14 14"><rect x="0" y="0" width="11.900" height="1.700" fill="#4a55c0"/><rect x="0" y="1.500" width="11.900" height="9.900" fill="#d0e2fb"/><rect x="1.500" y="3.200" width="1.400" height="5.700" fill="#b5d0f7"/><rect x="3.400" y="3.200" width="6" height="5.700" fill="#4a90e2"/><rect x="3.400" y="4.800" width="6" height=".5" fill="#a8c8f5"/><rect x="3.400" y="6.800" width="6" height=".5" fill="#a8c8f5"/><path d="M12.600 6.900L6.900 12.100" stroke="#f59a14" stroke-width="2.200"/><path d="M7.600 11.500L5.800 13L6.300 10.900Z" fill="#6d4c2f"/><path d="M13.500 6L12.300 7.100L11.900 6.300L13 5.400Z" fill="#ef7d8c"/></svg><span class="c" style="left:96px;width:92px">267</span><span class="c" style="left:196px;width:142px">ABOBORA BATA</span><span class="c" style="left:446px;width:142px">MARCA PADRÃO</span><span class="c" style="left:596px;width:192px">GRUPO PADRÃO</span><span class="c" style="left:796px;width:302px">0</span><span class="c" style="left:1106px;width:92px">NÃO</span><span class="c" style="left:1206px;width:192px">07099300-00-0000000</span><span class="c r" style="left:1400px;width:85px">R$ 3,20</span><span class="c r" style="left:1492px;width:85px">R$ 5,99</span><svg class="ic" style="left:1593px;top:5px" width="14" height="14" viewBox="0 0 14 14"><circle cx="7" cy="7" r="7" fill="#e5483d"/><path d="M4.3 4.3 L9.7 9.7 M9.7 4.3 L4.3 9.7" stroke="#fff" stroke-width="1.7" stroke-linecap="round"/></svg></div></div>
<div class="row odd" style="top:346px"><i class="vl" style="left:29px"></i><i class="vl" style="left:59px"></i><i class="vl" style="left:89px"></i><i class="vl" style="left:189px"></i><i class="vl" style="left:339px"></i><i class="vl" style="left:439px"></i><i class="vl" style="left:589px"></i><i class="vl" style="left:789px"></i><i class="vl" style="left:1099px"></i><i class="vl" style="left:1199px"></i><i class="vl" style="left:1399px"></i><i class="vl" style="left:1491px"></i><i class="vl" style="left:1583px"></i><div class="rc"><svg class="ic" style="left:39px;top:7px" width="15" height="10" viewBox="0 0 15 10"><path d="M0.300 5.200C3 0.200 12 0.200 14.600 5.200C12 9.800 3 9.800 0.300 5.200Z" fill="#f1f6f8" stroke="#d3dde1" stroke-width="0.700"/><path d="M0.300 5.200C3 -0.300 12 -0.300 14.600 5.200" fill="none" stroke="#8fa5ae" stroke-width="1"/><circle cx="7.400" cy="5.300" r="3.100" fill="#18a5b8"/><circle cx="7.400" cy="5.300" r="1.300" fill="#0b5563"/></svg><svg class="ic" style="left:69px;top:6px" width="14" height="14" viewBox="0 0 14 14"><rect x="0" y="0" width="11.900" height="1.700" fill="#4a55c0"/><rect x="0" y="1.500" width="11.900" height="9.900" fill="#d0e2fb"/><rect x="1.500" y="3.200" width="1.400" height="5.700" fill="#b5d0f7"/><rect x="3.400" y="3.200" width="6" height="5.700" fill="#4a90e2"/><rect x="3.400" y="4.800" width="6" height=".5" fill="#a8c8f5"/><rect x="3.400" y="6.800" width="6" height=".5" fill="#a8c8f5"/><path d="M12.600 6.900L6.900 12.100" stroke="#f59a14" stroke-width="2.200"/><path d="M7.600 11.500L5.800 13L6.300 10.900Z" fill="#6d4c2f"/><path d="M13.500 6L12.300 7.100L11.900 6.300L13 5.400Z" fill="#ef7d8c"/></svg><span class="c" style="left:96px;width:92px">1</span><span class="c" style="left:196px;width:142px">ABACATE</span><span class="c" style="left:446px;width:142px">MARCA PADRÃO</span><span class="c" style="left:596px;width:192px">GRUPO PADRÃO</span><span class="c" style="left:796px;width:302px">0</span><span class="c" style="left:1106px;width:92px">NÃO</span><span class="c" style="left:1206px;width:192px">08044000-00-0000000</span><span class="c r" style="left:1400px;width:85px">R$ 4,00</span><span class="c r" style="left:1492px;width:85px">R$ 9,99</span><svg class="ic" style="left:1593px;top:5px" width="14" height="14" viewBox="0 0 14 14"><circle cx="7" cy="7" r="7" fill="#e5483d"/><path d="M4.3 4.3 L9.7 9.7 M9.7 4.3 L4.3 9.7" stroke="#fff" stroke-width="1.7" stroke-linecap="round"/></svg></div></div>
<div class="row even" style="top:371px"><i class="vl" style="left:29px"></i><i class="vl" style="left:59px"></i><i class="vl" style="left:89px"></i><i class="vl" style="left:189px"></i><i class="vl" style="left:339px"></i><i class="vl" style="left:439px"></i><i class="vl" style="left:589px"></i><i class="vl" style="left:789px"></i><i class="vl" style="left:1099px"></i><i class="vl" style="left:1199px"></i><i class="vl" style="left:1399px"></i><i class="vl" style="left:1491px"></i><i class="vl" style="left:1583px"></i><div class="rc"><svg class="ic" style="left:39px;top:7px" width="15" height="10" viewBox="0 0 15 10"><path d="M0.300 5.200C3 0.200 12 0.200 14.600 5.200C12 9.800 3 9.800 0.300 5.200Z" fill="#f1f6f8" stroke="#d3dde1" stroke-width="0.700"/><path d="M0.300 5.200C3 -0.300 12 -0.300 14.600 5.200" fill="none" stroke="#8fa5ae" stroke-width="1"/><circle cx="7.400" cy="5.300" r="3.100" fill="#18a5b8"/><circle cx="7.400" cy="5.300" r="1.300" fill="#0b5563"/></svg><svg class="ic" style="left:69px;top:6px" width="14" height="14" viewBox="0 0 14 14"><rect x="0" y="0" width="11.900" height="1.700" fill="#4a55c0"/><rect x="0" y="1.500" width="11.900" height="9.900" fill="#d0e2fb"/><rect x="1.500" y="3.200" width="1.400" height="5.700" fill="#b5d0f7"/><rect x="3.400" y="3.200" width="6" height="5.700" fill="#4a90e2"/><rect x="3.400" y="4.800" width="6" height=".5" fill="#a8c8f5"/><rect x="3.400" y="6.800" width="6" height=".5" fill="#a8c8f5"/><path d="M12.600 6.900L6.900 12.100" stroke="#f59a14" stroke-width="2.200"/><path d="M7.600 11.500L5.800 13L6.300 10.900Z" fill="#6d4c2f"/><path d="M13.500 6L12.300 7.100L11.900 6.300L13 5.400Z" fill="#ef7d8c"/></svg><span class="c" style="left:96px;width:92px">4373</span><span class="c" style="left:196px;width:142px">MORANGO FRUTA</span><span class="c" style="left:446px;width:142px">MARCA PADRÃO</span><span class="c" style="left:596px;width:192px">GRUPO PADRÃO</span><span class="c" style="left:796px;width:302px">0</span><span class="c" style="left:1106px;width:92px">NÃO</span><span class="c" style="left:1206px;width:192px">08101000-00-0000000</span><span class="c r" style="left:1400px;width:85px">R$ 12,90</span><span class="c r" style="left:1492px;width:85px">R$ 12,90</span><svg class="ic" style="left:1593px;top:5px" width="14" height="14" viewBox="0 0 14 14"><circle cx="7" cy="7" r="7" fill="#e5483d"/><path d="M4.3 4.3 L9.7 9.7 M9.7 4.3 L4.3 9.7" stroke="#fff" stroke-width="1.7" stroke-linecap="round"/></svg></div></div>
<div class="row odd" style="top:396px"><i class="vl" style="left:29px"></i><i class="vl" style="left:59px"></i><i class="vl" style="left:89px"></i><i class="vl" style="left:189px"></i><i class="vl" style="left:339px"></i><i class="vl" style="left:439px"></i><i class="vl" style="left:589px"></i><i class="vl" style="left:789px"></i><i class="vl" style="left:1099px"></i><i class="vl" style="left:1199px"></i><i class="vl" style="left:1399px"></i><i class="vl" style="left:1491px"></i><i class="vl" style="left:1583px"></i><div class="rc"><svg class="ic" style="left:39px;top:7px" width="15" height="10" viewBox="0 0 15 10"><path d="M0.300 5.200C3 0.200 12 0.200 14.600 5.200C12 9.800 3 9.800 0.300 5.200Z" fill="#f1f6f8" stroke="#d3dde1" stroke-width="0.700"/><path d="M0.300 5.200C3 -0.300 12 -0.300 14.600 5.200" fill="none" stroke="#8fa5ae" stroke-width="1"/><circle cx="7.400" cy="5.300" r="3.100" fill="#18a5b8"/><circle cx="7.400" cy="5.300" r="1.300" fill="#0b5563"/></svg><svg class="ic" style="left:69px;top:6px" width="14" height="14" viewBox="0 0 14 14"><rect x="0" y="0" width="11.900" height="1.700" fill="#4a55c0"/><rect x="0" y="1.500" width="11.900" height="9.900" fill="#d0e2fb"/><rect x="1.500" y="3.200" width="1.400" height="5.700" fill="#b5d0f7"/><rect x="3.400" y="3.200" width="6" height="5.700" fill="#4a90e2"/><rect x="3.400" y="4.800" width="6" height=".5" fill="#a8c8f5"/><rect x="3.400" y="6.800" width="6" height=".5" fill="#a8c8f5"/><path d="M12.600 6.900L6.900 12.100" stroke="#f59a14" stroke-width="2.200"/><path d="M7.600 11.500L5.800 13L6.300 10.900Z" fill="#6d4c2f"/><path d="M13.500 6L12.300 7.100L11.900 6.300L13 5.400Z" fill="#ef7d8c"/></svg><span class="c" style="left:96px;width:92px">127</span><span class="c" style="left:196px;width:142px">SHORT JEANS ONC...</span><span class="c" style="left:446px;width:142px">MARCA PADRÃO</span><span class="c" style="left:596px;width:192px">GRUPO PADRÃO</span><span class="c" style="left:796px;width:302px"></span><span class="c" style="left:1106px;width:92px">NÃO</span><span class="c" style="left:1206px;width:192px">01012100-00-0000000</span><span class="c r" style="left:1400px;width:85px">R$ 50,00</span><span class="c r" style="left:1492px;width:85px">R$ 60,00</span><svg class="ic" style="left:1593px;top:5px" width="14" height="14" viewBox="0 0 14 14"><circle cx="7" cy="7" r="7" fill="#e5483d"/><path d="M4.3 4.3 L9.7 9.7 M9.7 4.3 L4.3 9.7" stroke="#fff" stroke-width="1.7" stroke-linecap="round"/></svg></div></div>
<div class="row even" style="top:421px"><i class="vl" style="left:29px"></i><i class="vl" style="left:59px"></i><i class="vl" style="left:89px"></i><i class="vl" style="left:189px"></i><i class="vl" style="left:339px"></i><i class="vl" style="left:439px"></i><i class="vl" style="left:589px"></i><i class="vl" style="left:789px"></i><i class="vl" style="left:1099px"></i><i class="vl" style="left:1199px"></i><i class="vl" style="left:1399px"></i><i class="vl" style="left:1491px"></i><i class="vl" style="left:1583px"></i><div class="rc"><svg class="ic" style="left:39px;top:7px" width="15" height="10" viewBox="0 0 15 10"><path d="M0.300 5.200C3 0.200 12 0.200 14.600 5.200C12 9.800 3 9.800 0.300 5.200Z" fill="#f1f6f8" stroke="#d3dde1" stroke-width="0.700"/><path d="M0.300 5.200C3 -0.300 12 -0.300 14.600 5.200" fill="none" stroke="#8fa5ae" stroke-width="1"/><circle cx="7.400" cy="5.300" r="3.100" fill="#18a5b8"/><circle cx="7.400" cy="5.300" r="1.300" fill="#0b5563"/></svg><svg class="ic" style="left:69px;top:6px" width="14" height="14" viewBox="0 0 14 14"><rect x="0" y="0" width="11.900" height="1.700" fill="#4a55c0"/><rect x="0" y="1.500" width="11.900" height="9.900" fill="#d0e2fb"/><rect x="1.500" y="3.200" width="1.400" height="5.700" fill="#b5d0f7"/><rect x="3.400" y="3.200" width="6" height="5.700" fill="#4a90e2"/><rect x="3.400" y="4.800" width="6" height=".5" fill="#a8c8f5"/><rect x="3.400" y="6.800" width="6" height=".5" fill="#a8c8f5"/><path d="M12.600 6.900L6.900 12.100" stroke="#f59a14" stroke-width="2.200"/><path d="M7.600 11.500L5.800 13L6.300 10.900Z" fill="#6d4c2f"/><path d="M13.500 6L12.300 7.100L11.900 6.300L13 5.400Z" fill="#ef7d8c"/></svg><span class="c" style="left:96px;width:92px">126</span><span class="c" style="left:196px;width:142px">BLUSA REGATA SIM...</span><span class="c" style="left:446px;width:142px">MARCA PADRÃO</span><span class="c" style="left:596px;width:192px">GRUPO PADRÃO</span><span class="c" style="left:796px;width:302px"></span><span class="c" style="left:1106px;width:92px">NÃO</span><span class="c" style="left:1206px;width:192px">00000000-00-0000000</span><span class="c r" style="left:1400px;width:85px">R$ 10,00</span><span class="c r" style="left:1492px;width:85px">R$ 20,00</span><svg class="ic" style="left:1593px;top:5px" width="14" height="14" viewBox="0 0 14 14"><circle cx="7" cy="7" r="7" fill="#e5483d"/><path d="M4.3 4.3 L9.7 9.7 M9.7 4.3 L4.3 9.7" stroke="#fff" stroke-width="1.7" stroke-linecap="round"/></svg></div></div>
<div class="row odd" style="top:446px"><i class="vl" style="left:29px"></i><i class="vl" style="left:59px"></i><i class="vl" style="left:89px"></i><i class="vl" style="left:189px"></i><i class="vl" style="left:339px"></i><i class="vl" style="left:439px"></i><i class="vl" style="left:589px"></i><i class="vl" style="left:789px"></i><i class="vl" style="left:1099px"></i><i class="vl" style="left:1199px"></i><i class="vl" style="left:1399px"></i><i class="vl" style="left:1491px"></i><i class="vl" style="left:1583px"></i><div class="rc"><svg class="ic" style="left:39px;top:7px" width="15" height="10" viewBox="0 0 15 10"><path d="M0.300 5.200C3 0.200 12 0.200 14.600 5.200C12 9.800 3 9.800 0.300 5.200Z" fill="#f1f6f8" stroke="#d3dde1" stroke-width="0.700"/><path d="M0.300 5.200C3 -0.300 12 -0.300 14.600 5.200" fill="none" stroke="#8fa5ae" stroke-width="1"/><circle cx="7.400" cy="5.300" r="3.100" fill="#18a5b8"/><circle cx="7.400" cy="5.300" r="1.300" fill="#0b5563"/></svg><svg class="ic" style="left:69px;top:6px" width="14" height="14" viewBox="0 0 14 14"><rect x="0" y="0" width="11.900" height="1.700" fill="#4a55c0"/><rect x="0" y="1.500" width="11.900" height="9.900" fill="#d0e2fb"/><rect x="1.500" y="3.200" width="1.400" height="5.700" fill="#b5d0f7"/><rect x="3.400" y="3.200" width="6" height="5.700" fill="#4a90e2"/><rect x="3.400" y="4.800" width="6" height=".5" fill="#a8c8f5"/><rect x="3.400" y="6.800" width="6" height=".5" fill="#a8c8f5"/><path d="M12.600 6.900L6.900 12.100" stroke="#f59a14" stroke-width="2.200"/><path d="M7.600 11.500L5.800 13L6.300 10.900Z" fill="#6d4c2f"/><path d="M13.500 6L12.300 7.100L11.900 6.300L13 5.400Z" fill="#ef7d8c"/></svg><span class="c" style="left:96px;width:92px">125</span><span class="c" style="left:196px;width:142px">CALCA JEANS PRE...</span><span class="c" style="left:446px;width:142px">MARCA PADRÃO</span><span class="c" style="left:596px;width:192px">GRUPO PADRÃO</span><span class="c" style="left:796px;width:302px"></span><span class="c" style="left:1106px;width:92px">NÃO</span><span class="c" style="left:1206px;width:192px">01012100-00-0000000</span><span class="c r" style="left:1400px;width:85px">R$ 30,00</span><span class="c r" style="left:1492px;width:85px">R$ 80,00</span><svg class="ic" style="left:1593px;top:5px" width="14" height="14" viewBox="0 0 14 14"><circle cx="7" cy="7" r="7" fill="#e5483d"/><path d="M4.3 4.3 L9.7 9.7 M9.7 4.3 L4.3 9.7" stroke="#fff" stroke-width="1.7" stroke-linecap="round"/></svg></div></div>
<div class="row even" style="top:471px"><i class="vl" style="left:29px"></i><i class="vl" style="left:59px"></i><i class="vl" style="left:89px"></i><i class="vl" style="left:189px"></i><i class="vl" style="left:339px"></i><i class="vl" style="left:439px"></i><i class="vl" style="left:589px"></i><i class="vl" style="left:789px"></i><i class="vl" style="left:1099px"></i><i class="vl" style="left:1199px"></i><i class="vl" style="left:1399px"></i><i class="vl" style="left:1491px"></i><i class="vl" style="left:1583px"></i><div class="rc"><svg class="ic" style="left:39px;top:7px" width="15" height="10" viewBox="0 0 15 10"><path d="M0.300 5.200C3 0.200 12 0.200 14.600 5.200C12 9.800 3 9.800 0.300 5.200Z" fill="#f1f6f8" stroke="#d3dde1" stroke-width="0.700"/><path d="M0.300 5.200C3 -0.300 12 -0.300 14.600 5.200" fill="none" stroke="#8fa5ae" stroke-width="1"/><circle cx="7.400" cy="5.300" r="3.100" fill="#18a5b8"/><circle cx="7.400" cy="5.300" r="1.300" fill="#0b5563"/></svg><svg class="ic" style="left:69px;top:6px" width="14" height="14" viewBox="0 0 14 14"><rect x="0" y="0" width="11.900" height="1.700" fill="#4a55c0"/><rect x="0" y="1.500" width="11.900" height="9.900" fill="#d0e2fb"/><rect x="1.500" y="3.200" width="1.400" height="5.700" fill="#b5d0f7"/><rect x="3.400" y="3.200" width="6" height="5.700" fill="#4a90e2"/><rect x="3.400" y="4.800" width="6" height=".5" fill="#a8c8f5"/><rect x="3.400" y="6.800" width="6" height=".5" fill="#a8c8f5"/><path d="M12.600 6.900L6.900 12.100" stroke="#f59a14" stroke-width="2.200"/><path d="M7.600 11.500L5.800 13L6.300 10.900Z" fill="#6d4c2f"/><path d="M13.500 6L12.300 7.100L11.900 6.300L13 5.400Z" fill="#ef7d8c"/></svg><span class="c" style="left:96px;width:92px">124</span><span class="c" style="left:196px;width:142px">BABY LOOK ABENC...</span><span class="c" style="left:446px;width:142px">MARCA PADRÃO</span><span class="c" style="left:596px;width:192px">GRUPO PADRÃO</span><span class="c" style="left:796px;width:302px"></span><span class="c" style="left:1106px;width:92px">NÃO</span><span class="c" style="left:1206px;width:192px">00000000-00-0000000</span><span class="c r" style="left:1400px;width:85px">R$ 20,00</span><span class="c r" style="left:1492px;width:85px">R$ 25,00</span><svg class="ic" style="left:1593px;top:5px" width="14" height="14" viewBox="0 0 14 14"><circle cx="7" cy="7" r="7" fill="#e5483d"/><path d="M4.3 4.3 L9.7 9.7 M9.7 4.3 L4.3 9.7" stroke="#fff" stroke-width="1.7" stroke-linecap="round"/></svg></div></div>
<div class="row odd" style="top:496px"><i class="vl" style="left:29px"></i><i class="vl" style="left:59px"></i><i class="vl" style="left:89px"></i><i class="vl" style="left:189px"></i><i class="vl" style="left:339px"></i><i class="vl" style="left:439px"></i><i class="vl" style="left:589px"></i><i class="vl" style="left:789px"></i><i class="vl" style="left:1099px"></i><i class="vl" style="left:1199px"></i><i class="vl" style="left:1399px"></i><i class="vl" style="left:1491px"></i><i class="vl" style="left:1583px"></i><div class="rc"><svg class="ic" style="left:39px;top:7px" width="15" height="10" viewBox="0 0 15 10"><path d="M0.300 5.200C3 0.200 12 0.200 14.600 5.200C12 9.800 3 9.800 0.300 5.200Z" fill="#f1f6f8" stroke="#d3dde1" stroke-width="0.700"/><path d="M0.300 5.200C3 -0.300 12 -0.300 14.600 5.200" fill="none" stroke="#8fa5ae" stroke-width="1"/><circle cx="7.400" cy="5.300" r="3.100" fill="#18a5b8"/><circle cx="7.400" cy="5.300" r="1.300" fill="#0b5563"/></svg><svg class="ic" style="left:69px;top:6px" width="14" height="14" viewBox="0 0 14 14"><rect x="0" y="0" width="11.900" height="1.700" fill="#4a55c0"/><rect x="0" y="1.500" width="11.900" height="9.900" fill="#d0e2fb"/><rect x="1.500" y="3.200" width="1.400" height="5.700" fill="#b5d0f7"/><rect x="3.400" y="3.200" width="6" height="5.700" fill="#4a90e2"/><rect x="3.400" y="4.800" width="6" height=".5" fill="#a8c8f5"/><rect x="3.400" y="6.800" width="6" height=".5" fill="#a8c8f5"/><path d="M12.600 6.900L6.900 12.100" stroke="#f59a14" stroke-width="2.200"/><path d="M7.600 11.500L5.800 13L6.300 10.900Z" fill="#6d4c2f"/><path d="M13.500 6L12.300 7.100L11.900 6.300L13 5.400Z" fill="#ef7d8c"/></svg><span class="c" style="left:96px;width:92px">123</span><span class="c" style="left:196px;width:142px">SOBRETUDO</span><span class="c" style="left:446px;width:142px">MARCA PADRÃO</span><span class="c" style="left:596px;width:192px">GRUPO PADRÃO</span><span class="c" style="left:796px;width:302px"></span><span class="c" style="left:1106px;width:92px">NÃO</span><span class="c" style="left:1206px;width:192px">00000000-00-0000000</span><span class="c r" style="left:1400px;width:85px">R$ 50,00</span><span class="c r" style="left:1492px;width:85px">R$ 100,00</span><svg class="ic" style="left:1593px;top:5px" width="14" height="14" viewBox="0 0 14 14"><circle cx="7" cy="7" r="7" fill="#e5483d"/><path d="M4.3 4.3 L9.7 9.7 M9.7 4.3 L4.3 9.7" stroke="#fff" stroke-width="1.7" stroke-linecap="round"/></svg></div></div>
<!-- dropdown menu -->
<div class="abs" style="left:287px;top:125px;width:157px;height:48px;background:#fff;box-shadow:0 1px 5px rgba(0,0,0,.38)">
 <svg class="ic" style="left:4px;top:6px" width="14" height="14" viewBox="0 0 14 14"><circle cx="7" cy="7" r="7" fill="#43a047"/><path d="M7 3.500V10.500M3.500 7H10.500" stroke="#fff" stroke-width="2"/></svg>
 <div class="abs" style="left:27px;top:0;height:24px;line-height:23px;font-size:13px;color:#111">Incluir</div>
 <svg class="ic" style="left:5px;top:29px" width="11" height="16" viewBox="0 0 11 16"><path d="M3 5V14.500H8M3 6.900H8M3 10.700H8" fill="none" stroke="#90caf9" stroke-width="1"/><circle cx="3" cy="2.800" r="2.700" fill="#66bb6a"/><circle cx="3" cy="2.800" r=".9" fill="#e8f5e9"/><rect x="7.500" y="5.800" width="2.800" height="2.200" fill="#4dd0e1"/><rect x="7.500" y="9.600" width="2.800" height="2.200" fill="#4dd0e1"/><rect x="7.500" y="13.400" width="2.800" height="2.200" fill="#4dd0e1"/></svg>
 <div class="abs" style="left:27px;top:24px;height:24px;line-height:23px;font-size:13px;color:#111">Incluir (Formulário)</div>
</div>

<!-- bottom panel -->
<div class="abs" style="left:41px;top:643px;width:1878px;height:186px;background:#fff"></div>
<div class="abs" style="left:36px;top:643px;width:5px;height:186px;background:#aed1ed"></div>
<div class="bt" style="top:648px;background:#aed1ed"><svg class="ic" style="left:9px;top:13px" width="14" height="14" viewBox="0 0 14 14"><rect x="0" y="0.500" width="13" height="8" rx="1.200" fill="#ffa000"/><g stroke="#ffca6a" stroke-width=".5"><path d="M2 .5v8M4 .5v8M6 .5v8M8 .5v8M10 .5v8"/></g><rect x="8.300" y="4.500" width="4.200" height="8.500" fill="#eceff1"/><rect x="9" y="4.500" width="1" height="8.500" fill="#8d8d8d"/><rect x="11" y="4.500" width="1" height="8.500" fill="#a6a6a6"/></svg></div>
<div class="bt" style="top:689px"><svg class="ic" style="left:10px;top:12px" width="16" height="17" viewBox="0 0 16 17"><g fill="#2e9d4e"><path d="M2 1.300L3.500 3L2 4.700L.5 3Z"/><path d="M2 6.300L3.500 8L2 9.700L.5 8Z"/><path d="M2 11.300L3.500 13L2 14.700L.5 13Z"/></g><path d="M10.300 0.800V15.300M6.300 11L10.300 15.300L14.300 11" fill="none" stroke="#2e9d4e" stroke-width="1.300"/></svg></div>
<div class="bt" style="top:730px"><svg class="ic" style="left:7px;top:12px" width="16" height="17" viewBox="0 0 16 17"><g fill="#c62828"><path d="M13.300 2.300L14.800 4L13.300 5.700L11.800 4Z"/><path d="M13.300 7.300L14.800 9L13.300 10.700L11.800 9Z"/><path d="M13.300 12.300L14.800 14L13.300 15.700L11.800 14Z"/></g><path d="M5 16.300V1.800M1 6L5 1.800L9 6" fill="none" stroke="#c62828" stroke-width="1.300"/></svg></div>
<div class="bt" style="top:771px"><svg class="ic" style="left:9px;top:13px" width="14" height="14" viewBox="0 0 14 14"><g transform="rotate(40 7 7)"><path d="M0.500 7L3.500 3.200Q4 2.800 4.800 2.800H12Q13.300 2.800 13.300 4.100V9.900Q13.300 11.200 12 11.200H4.800Q4 11.200 3.500 10.800Z" fill="#3fae49"/><circle cx="3" cy="7" r=".8" fill="#c8e6c9"/><text x="8.600" y="9.600" font-size="7.500" font-weight="bold" font-family="Liberation Sans" fill="#fff" text-anchor="middle">S</text></g></svg></div>
<div class="abs" style="left:41px;top:643px;width:28px;height:66px;background:#f5f5f5"></div>
<svg class="ic" style="left:48px;top:648px" width="14" height="13" viewBox="0 0 14 13"><circle cx="5.700" cy="5.500" r="4.900" fill="#64b5f6" stroke="#5f6b73" stroke-width="1"/><path d="M9.500 9.300L13.300 12.300" stroke="#37474f" stroke-width="1.500" stroke-linecap="round"/></svg>
<svg class="ic" style="left:48px;top:669px" width="14" height="14" viewBox="0 0 14 14"><g transform="translate(7 7)" fill="#607d8b"><circle r="4.800"/><rect x="-1.200" y="-7" width="2.400" height="3" transform="rotate(0)"/><rect x="-1.200" y="-7" width="2.400" height="3" transform="rotate(45)"/><rect x="-1.200" y="-7" width="2.400" height="3" transform="rotate(90)"/><rect x="-1.200" y="-7" width="2.400" height="3" transform="rotate(135)"/><rect x="-1.200" y="-7" width="2.400" height="3" transform="rotate(180)"/><rect x="-1.200" y="-7" width="2.400" height="3" transform="rotate(225)"/><rect x="-1.200" y="-7" width="2.400" height="3" transform="rotate(270)"/><rect x="-1.200" y="-7" width="2.400" height="3" transform="rotate(315)"/><circle r="2.700" fill="#b0bec5"/></g></svg>
<div class="abs" style="left:69px;top:643px;width:1850px;height:29px;background:#f5f5f5"></div>
<div class="abs" style="left:69px;top:672px;width:1850px;height:37px;background:linear-gradient(#c9c9c9 0,#d9d9d9 30%,#ececec 70%,#f6f6f6 100%)"></div>
<i class="hsep" style="left:68px;top:643px;height:66px"></i>
<i class="hsep" style="left:689px;top:643px;height:66px"></i>
<i class="hsep" style="left:875px;top:643px;height:66px"></i>
<i class="hsep" style="left:1061px;top:643px;height:66px"></i>
<i class="hsep" style="left:1247px;top:643px;height:66px"></i>
<i class="hsep" style="left:1433px;top:643px;height:66px"></i>
<i class="hsep" style="left:1619px;top:643px;height:66px"></i>
<i class="hsep" style="left:1769px;top:643px;height:66px"></i>
<div class="hd" style="left:79px;top:644px;width:600px">Entidade</div>
<div class="hd" style="left:690px;top:644px;width:163px;text-align:right">Valor Custo</div>
<div class="hd" style="left:876px;top:644px;width:163px;text-align:right">Valor Venda</div>
<div class="hd" style="left:1062px;top:644px;width:163px;text-align:right">Estoque</div>
<div class="hd" style="left:1248px;top:644px;width:163px;text-align:right">A Receber</div>
<div class="hd" style="left:1434px;top:644px;width:163px;text-align:right">Reservado</div>
<div class="hd" style="left:1630px;top:644px;width:130px">Última Saída</div>
<div class="hd" style="left:1780px;top:644px;width:130px">Última Entrada</div>
<div class="fl" style="left:87px;top:673px;line-height:37px;height:37px">Filtrar</div>
<div class="fl" style="left:1638px;top:673px;line-height:37px;height:37px">INICIO-FIM</div>
<div class="dd" style="left:1748px;top:672px;width:21px;height:37px"></div>
<div class="fl" style="left:1788px;top:673px;line-height:37px;height:37px">INICIO-FIM</div>
<div class="dd" style="left:1898px;top:672px;width:21px;height:37px"></div>
<div class="brow" style="top:709px;background:#f7f7f7;color:#3a3a3a">
 <i class="vl" style="left:620px"></i><i class="vl" style="left:806px"></i><i class="vl" style="left:992px"></i><i class="vl" style="left:1178px"></i><i class="vl" style="left:1364px"></i><i class="vl" style="left:1550px"></i><i class="vl" style="left:1700px"></i>
 <span class="c" style="left:6px">Matriz - 1</span><span class="c r" style="left:620px;width:180px">R$ 4,00</span><span class="c r" style="left:806px;width:180px">R$ 7,99</span><span class="c r" style="left:992px;width:180px">0</span><span class="c r" style="left:1178px;width:180px">0</span><span class="c r" style="left:1364px;width:180px">0</span>
</div>
<div class="brow" style="top:734px;background:#fbfbfb">
 <i class="vl" style="left:620px"></i><i class="vl" style="left:806px"></i><i class="vl" style="left:992px"></i><i class="vl" style="left:1178px"></i><i class="vl" style="left:1364px"></i><i class="vl" style="left:1550px"></i><i class="vl" style="left:1700px"></i>
 <span class="c" style="left:6px">Fabrica - 2</span><span class="c r" style="left:620px;width:180px">R$ 4,00</span><span class="c r" style="left:806px;width:180px">R$ 7,99</span><span class="c r" style="left:992px;width:180px">0</span><span class="c r" style="left:1178px;width:180px">0</span><span class="c r" style="left:1364px;width:180px">0</span>
</div>

<!-- red annotations -->
<svg class="ic" style="left:0;top:0" width="1919" height="829" viewBox="0 0 1919 829">
 <g fill="none" stroke="#ff0000" stroke-width="4" stroke-linecap="round" stroke-linejoin="round">
  <path d="M604.500 159.500L453 161"/><path d="M470 144L452.500 161L469.500 177"/>
  <path d="M254 207H348"/><path d="M335 193.500L349 207L335 220"/>
 </g>
 <rect x="365.750" y="192.750" width="30.500" height="29" fill="none" stroke="#ff0000" stroke-width="3.500"/>
</svg>

</body>
</html>
